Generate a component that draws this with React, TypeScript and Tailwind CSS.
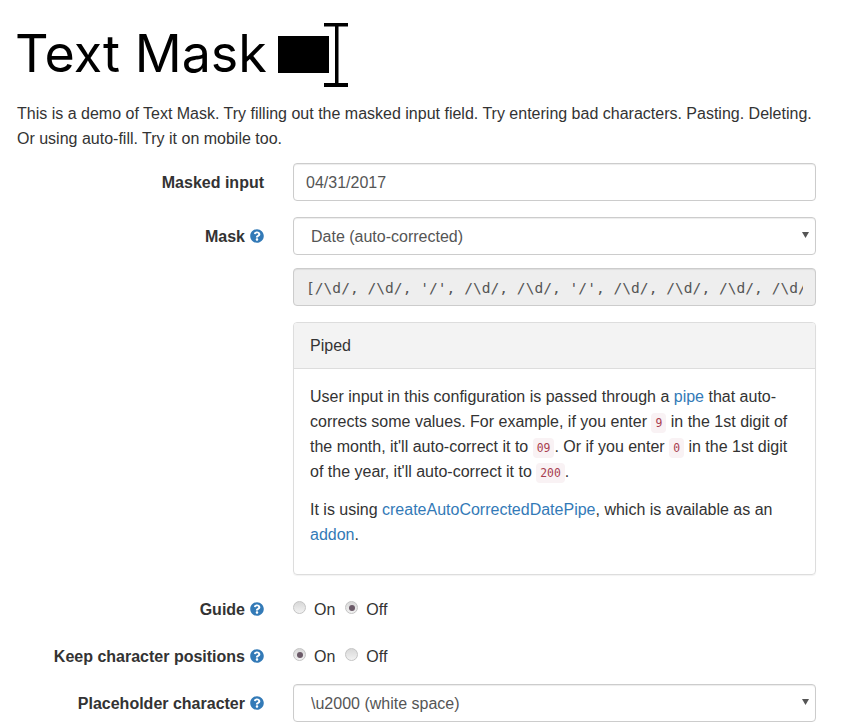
import { FaQuestionCircle } from 'react-icons/fa'

const inputClasses =
  'block h-[38px] w-full rounded-[4px] border border-[#ccc] px-3 text-[#555] shadow-[inset_0_1px_1px_rgba(0,0,0,0.075)] outline-none'

const Help = () => (
  <FaQuestionCircle className="ml-[5px] inline-block h-[14px] w-[14px] align-[-1px] text-[#337ab7]" aria-hidden="true" />
)

const Label = ({ text, help }: { text: string; help?: boolean }) => (
  <label className="block h-[38px] text-right text-[16px] font-bold leading-[40px] text-[#333]">
    {text}
    {help && <Help />}
  </label>
)

const Radio = ({ label, checked }: { label: string; checked?: boolean }) => (
  <span className="mr-[10px] inline-flex items-center">
    <span className="mb-[4px] mr-[8px] flex h-[13px] w-[13px] items-center justify-center rounded-full border border-[#c4c4c4] bg-gradient-to-b from-[#d8d8d8] to-[#f2f2f2]">
      {checked && <span className="h-[6px] w-[6px] rounded-full bg-[#6b5a68]" />}
    </span>
    {label}
  </span>
)

const Code = ({ children }: { children: string }) => (
  <code className="rounded-[4px] bg-[#f9f2f4] px-[4px] py-[3px] font-['DejaVu_Sans_Mono',monospace] text-[11.4px] leading-none text-[#a8404f]">
    {children}
  </code>
)

const Link = ({ children }: { children: string }) => (
  <a href="#" className="text-[#337ab7]">
    {children}
  </a>
)

const Select = ({ value, className }: { value: string; className?: string }) => (
  <div className={'relative ' + (className ?? '')}>
    <select className={inputClasses + ' appearance-none bg-white pl-[17px] text-[16px]'} defaultValue={value}>
      <option value={value}>{value}</option>
    </select>
    <svg className="absolute right-[7px] top-[15px]" width="7" height="6" viewBox="0 0 7 6" aria-hidden="true">
      <path d="M0 0h7L3.5 6z" fill="#555" />
    </svg>
  </div>
)

const App = () => (
  <div className="min-h-[728px] overflow-hidden bg-white px-[17px] font-['Liberation_Sans',Arial,sans-serif] text-[16px] leading-[25px] text-[#333]">
    <h1 className="flex h-[101px] items-start text-black">
      <span className="-ml-[2px] mt-[19px] w-[263px] whitespace-nowrap font-['Inter',sans-serif] text-[52px] font-normal leading-[70px]">Text Mask</span>
      <svg className="mt-[23px]" width="70" height="64" viewBox="0 0 70 64" aria-hidden="true">
        <rect x="0" y="13" width="51" height="37" fill="#000" />
        <rect x="46" y="0" width="24" height="3.5" fill="#000" />
        <rect x="57" y="0" width="3.5" height="64" fill="#000" />
        <rect x="46" y="60" width="24" height="4" fill="#000" />
      </svg>
    </h1>
    <p className="w-[808px]">
      This is a demo of Text Mask. Try filling out the masked input field. Try entering bad characters. Pasting. Deleting. Or using auto-fill. Try it on mobile too.
    </p>
    <form className="mt-[12px] grid w-[799px] grid-cols-[247px_523px] gap-x-[29px]">
      <Label text="Masked input" />
      <input className={inputClasses + ' bg-white pt-[1px] text-[16px]'} defaultValue="04/31/2017" />

      <div className="mt-[16px]">
        <Label text="Mask" help />
      </div>
      <Select className="mt-[16px]" value="Date (auto-corrected)" />

      <div />
      <input
        readOnly
        className={inputClasses + " mt-[13px] bg-[#eee] font-['DejaVu_Sans_Mono',monospace] text-[14.6px]"}
        defaultValue="[/\d/, /\d/, '/', /\d/, /\d/, '/', /\d/, /\d/, /\d/, /\d/]"
      />

      <div />
      <div className="mt-[16px] h-[253px] rounded-[4px] border border-[#ddd] shadow-[0_1px_1px_rgba(0,0,0,0.05)]">
        <div className="h-[46px] rounded-t-[3px] border-b border-[#ddd] bg-[#f3f3f3] px-[16px] leading-[45px]">Piped</div>
        <div className="px-[16px] pt-[15px]">
          <p>
            User input in this configuration is passed through a <Link>pipe</Link> that auto-corrects some values. For example, if you enter <Code>9</Code> in the 1st digit of the month, it'll auto-correct it to <Code>09</Code>. Or if you enter <Code>0</Code> in the 1st digit of the year, it'll auto-correct it to <Code>200</Code>.
          </p>
          <p className="mt-[13px]">
            It is using <Link>createAutoCorrectedDatePipe</Link>, which is available as an <Link>addon</Link>.
          </p>
        </div>
      </div>

      <div className="mt-[15px]">
        <Label text="Guide" help />
      </div>
      <div className="mt-[15px] flex h-[38px] items-center pt-[1px]">
        <Radio label="On" />
        <Radio label="Off" checked />
      </div>

      <div className="mt-[9px]">
        <Label text="Keep character positions" help />
      </div>
      <div className="mt-[9px] flex h-[38px] items-center pt-[1px]">
        <Radio label="On" checked />
        <Radio label="Off" />
      </div>

      <div className="mt-[9px]">
        <Label text="Placeholder character" help />
      </div>
      <Select className="mt-[9px]" value="\u2000 (white space)" />
    </form>
  </div>
)

export default App
